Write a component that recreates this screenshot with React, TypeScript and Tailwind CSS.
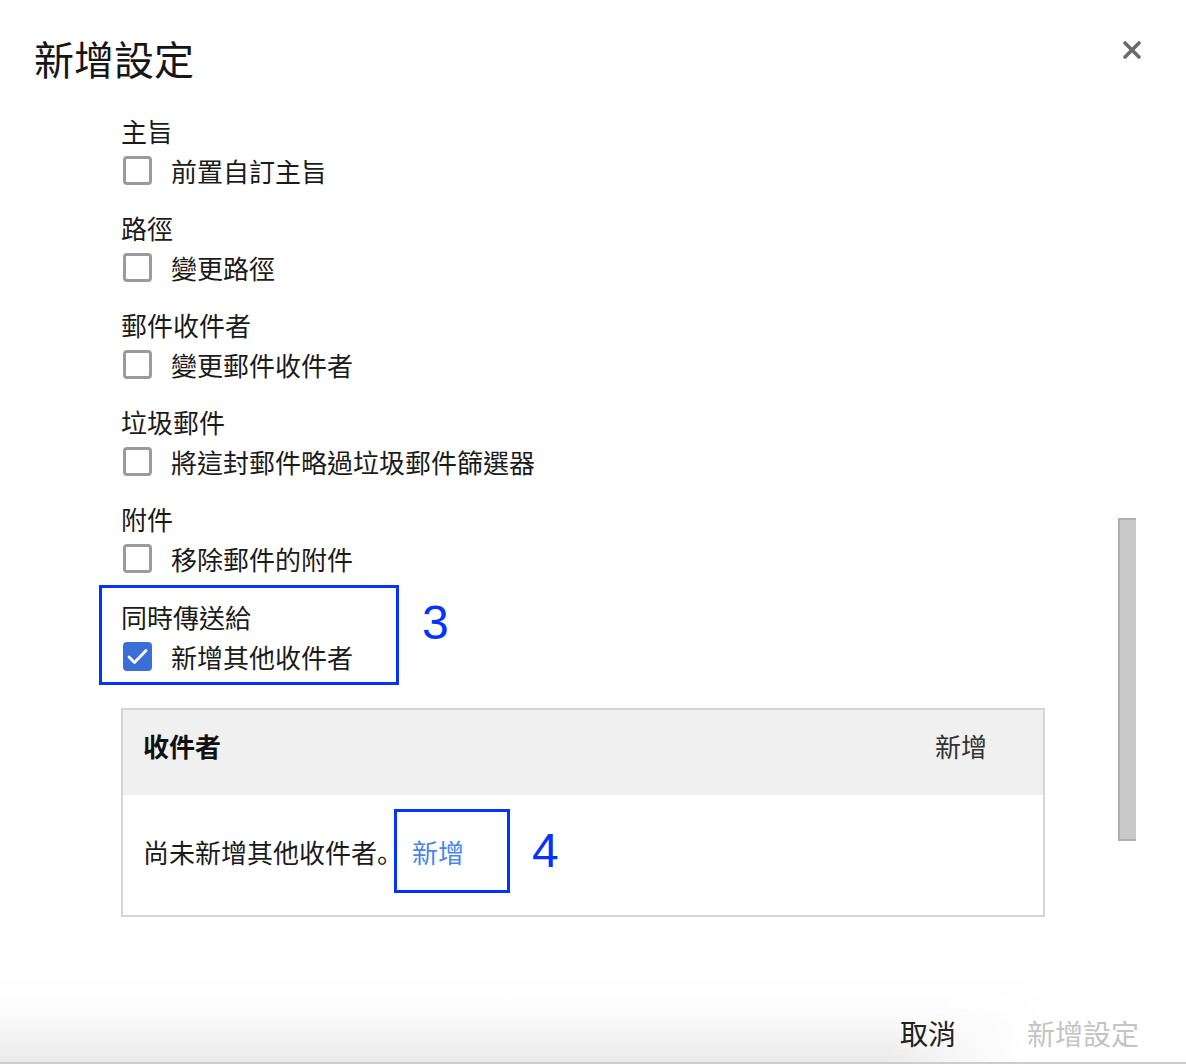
const cjk = "font-['Noto_Sans_CJK_TC','Noto_Sans_CJK_SC',sans-serif]";

type Section = { title: string; option: string; checked?: boolean };

const sections: Section[] = [
  { title: "主旨", option: "前置自訂主旨" },
  { title: "路徑", option: "變更路徑" },
  { title: "郵件收件者", option: "變更郵件收件者" },
  { title: "垃圾郵件", option: "將這封郵件略過垃圾郵件篩選器" },
  { title: "附件", option: "移除郵件的附件" },
];

function Checkbox({ checked }: { checked?: boolean }) {
  if (checked) {
    return (
      <span className="flex size-[29px] shrink-0 items-center justify-center rounded-[4px] bg-[#3a6fd8]">
        <svg width="29" height="29" viewBox="0 0 29 29" fill="none">
          <path d="M6 15l5.5 5.5L23 8.5" stroke="white" strokeWidth="2.8" strokeLinecap="round" strokeLinejoin="round" />
        </svg>
      </span>
    );
  }
  return <span className="size-[29px] shrink-0 rounded-[4px] border-[3px] border-[#9b9b9b] bg-white" />;
}

function OptionGroup({ title, option, checked }: Section) {
  return (
    <div className="flex flex-col">
      <div className="h-[34px] text-[26px] leading-[34px] text-[#1b1b1b]">{title}</div>
      <label className="flex h-[44px] items-center gap-[19px] pl-[2px] text-[26px] text-[#1b1b1b]">
        <Checkbox checked={checked} />
        <span>{option}</span>
      </label>
    </div>
  );
}

export default function App() {
  return (
    <div className={`relative flex h-[1064px] w-full flex-col overflow-hidden bg-white ${cjk}`}>
      <header className="flex items-start justify-between pl-[34px] pr-[44px] pt-[36px]">
        <h1 className="text-[40px] leading-[44px] font-normal text-[#161616]">新增設定</h1>
        <button type="button" className="mt-[4px] flex size-[20px] items-center justify-center">
          <svg width="20" height="20" viewBox="0 0 20 20">
            <path d="M3 3l14 14M17 3L3 17" stroke="#6a6a6a" strokeWidth="3.6" strokeLinecap="round" />
          </svg>
        </button>
      </header>

      <main className="flex flex-col pl-[121px] pt-[34px]">
        <div className="flex flex-col gap-[19px]">
          {sections.map((s) => (
            <OptionGroup key={s.title} {...s} />
          ))}
        </div>

        <div className="mt-[5px] flex items-start gap-[23px]">
          <div className="-ml-[22px] w-[300px] border-[3px] border-[#0433ff] pb-[4px] pl-[19px] pt-[12px]">
            <OptionGroup title="同時傳送給" option="新增其他收件者" checked />
          </div>
          <span className="mt-[10px] font-['Liberation_Sans',sans-serif] text-[48px] leading-[56px] text-[#0433ff]">3</span>
        </div>

        <section className="mt-[23px] w-[924px] border-2 border-[#d5d5d5]">
          <div className="flex h-[85px] items-center justify-between bg-[#f0f0f0] pb-[14px] pl-[20px] pr-[56px]">
            <span className="text-[26px] font-bold text-[#111]">收件者</span>
            <span className="text-[26px] text-[#333]">新增</span>
          </div>
          <div className="flex h-[120px] items-center pb-[8px] pl-[20px]">
            <span className="text-[26px] text-[#1b1b1b]">
              尚未新增其他收件者<span className="font-['Noto_Sans_CJK_SC',sans-serif]">。</span>
            </span>
            <div className="-ml-[9px] flex h-[84px] w-[116px] items-center border-[3px] border-[#0433ff] pl-[15px]">
              <span className="text-[26px] text-[#4a86e8]">新增</span>
            </div>
            <span className="ml-[22px] font-['Liberation_Sans',sans-serif] text-[48px] leading-[56px] text-[#0433ff]">4</span>
          </div>
        </section>
      </main>

      <div className="absolute left-[1118px] top-[518px] h-[323px] w-[18px] border-l-2 border-y-2 border-[#b0b0b0] bg-[#c9c9c9]" />

      <footer className="mt-auto flex h-[94px] items-end justify-end gap-[71px] border-b-2 border-[#cdcdcd] bg-[radial-gradient(ellipse_300px_140px_at_100%_100%,#ffffff_55%,rgba(255,255,255,0)_100%),linear-gradient(to_bottom,#ffffff,#fdfdfd_40%,#ebebeb)] pb-[8px] pr-[47px]">
        <button type="button" className="text-[28px] leading-[42px] text-[#222]">取消</button>
        <button type="button" className="text-[28px] leading-[42px] text-[#c4c4c4]">新增設定</button>
      </footer>
    </div>
  );
}
